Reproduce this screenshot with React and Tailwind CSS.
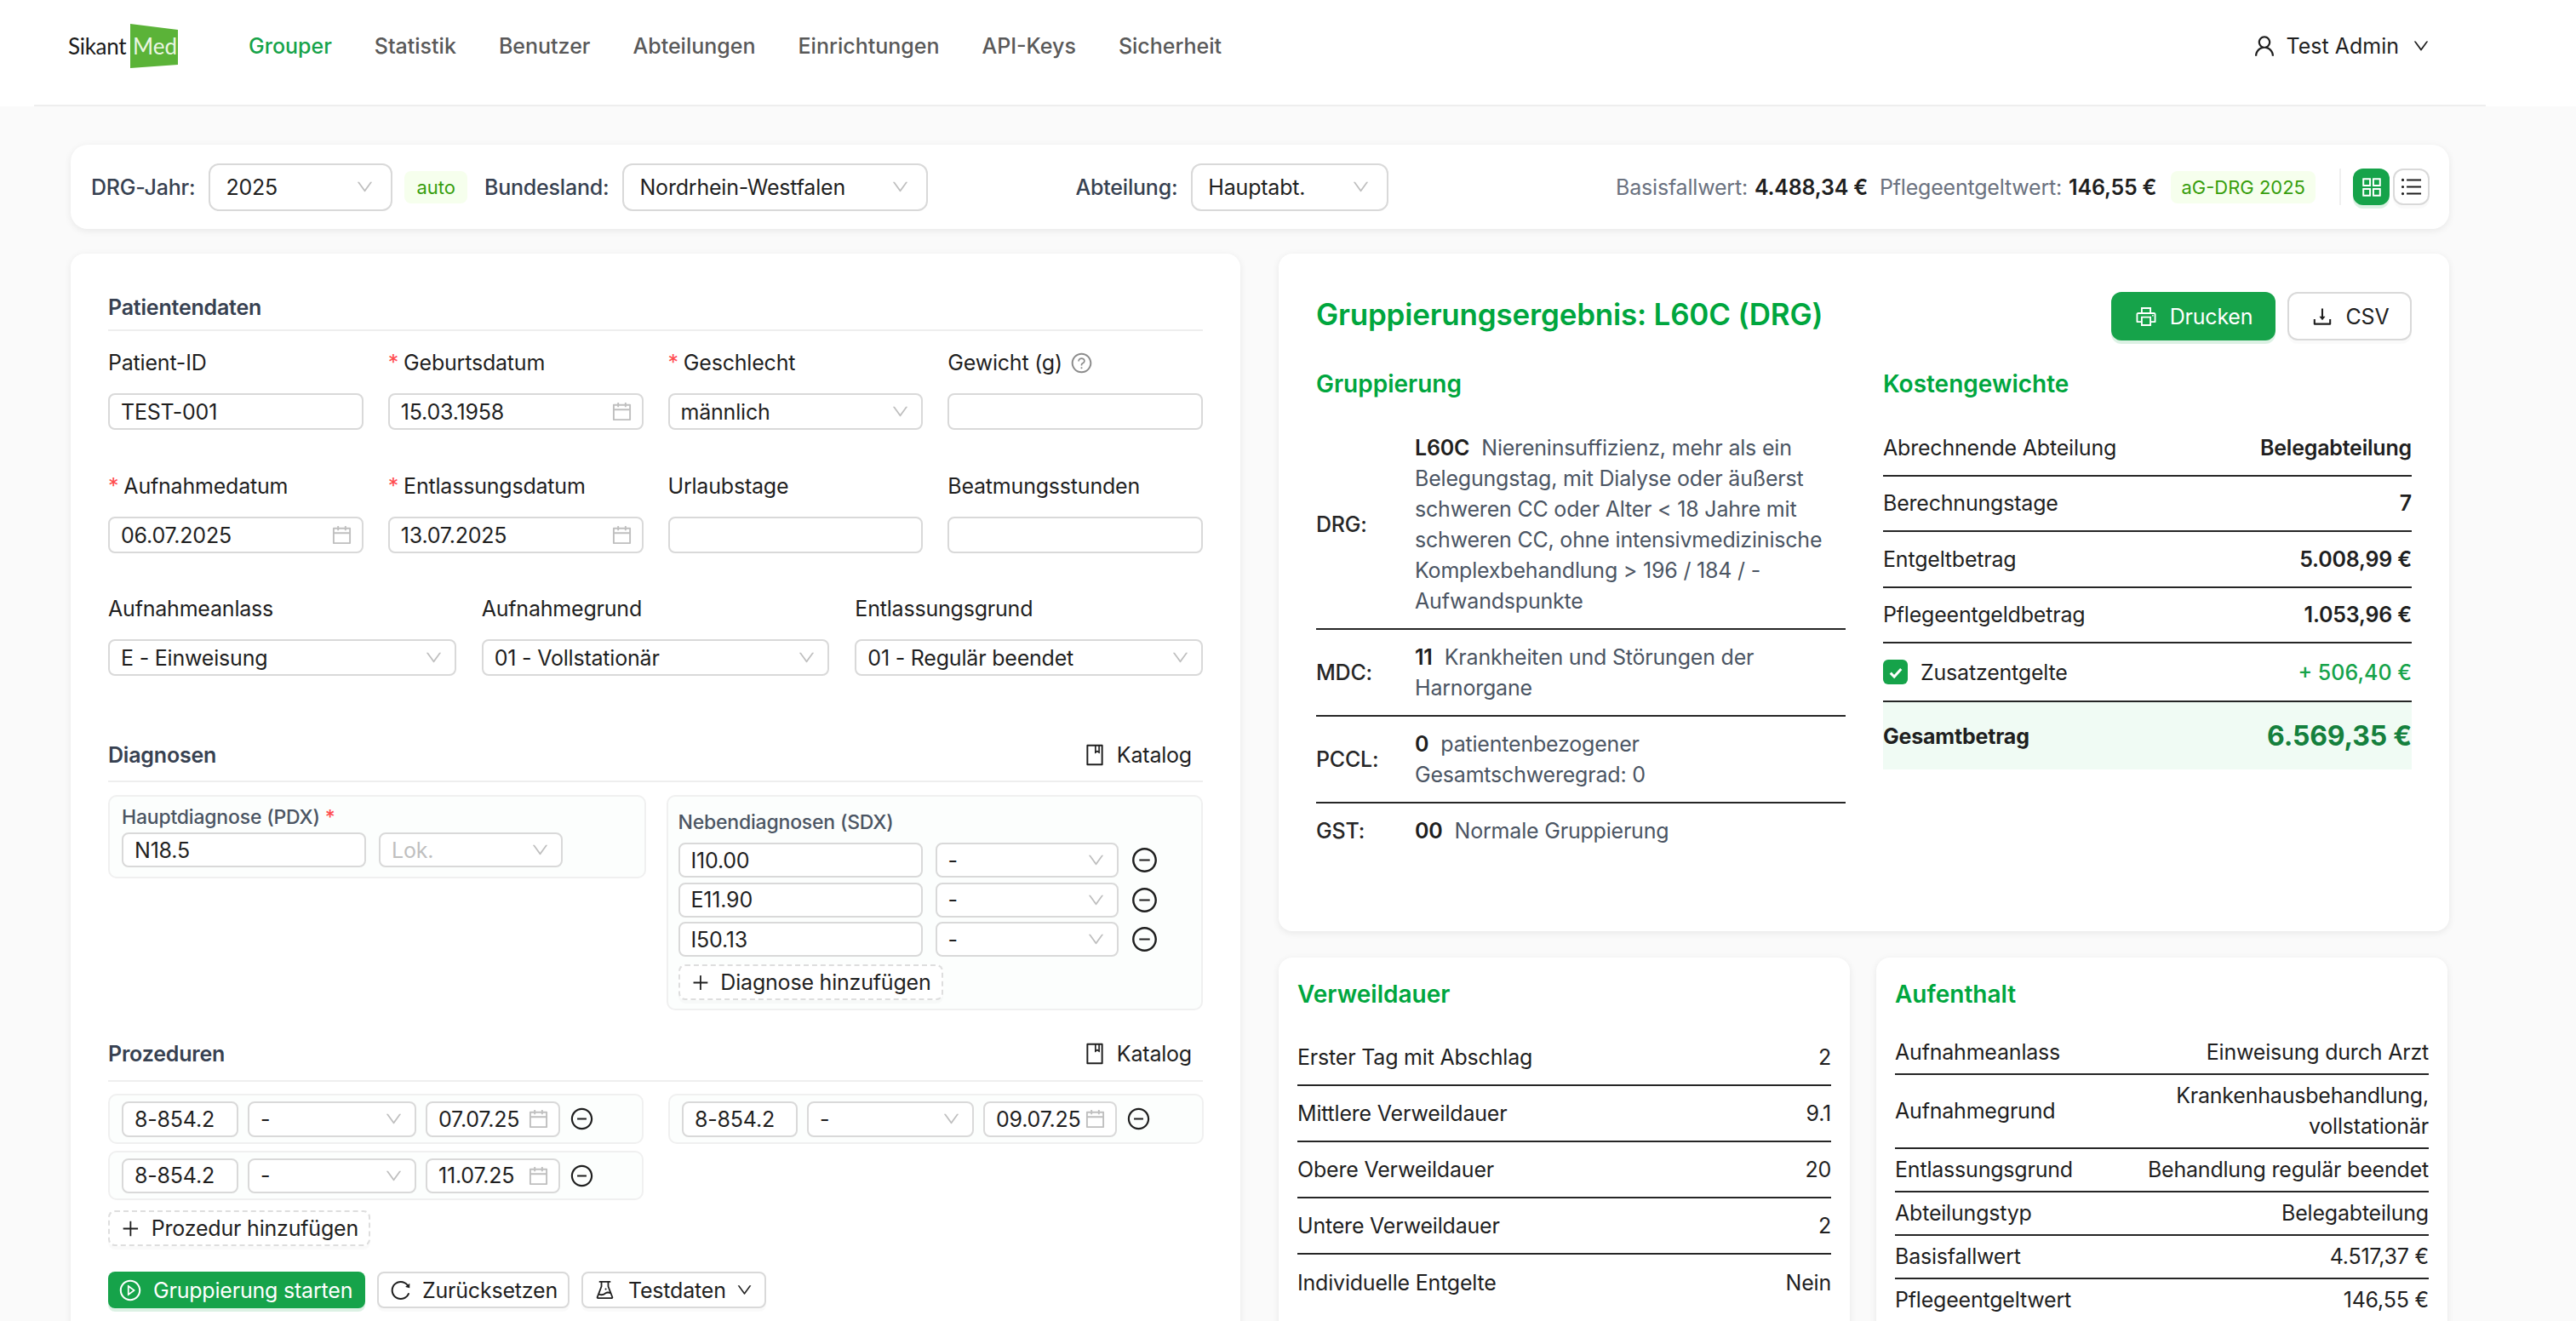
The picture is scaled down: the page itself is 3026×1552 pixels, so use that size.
import {
  AiOutlineAppstore,
  AiOutlineBook,
  AiOutlineCalendar,
  AiOutlineDown,
  AiOutlineDownload,
  AiOutlineExperiment,
  AiOutlineMinusCircle,
  AiOutlinePlayCircle,
  AiOutlinePlus,
  AiOutlinePrinter,
  AiOutlineQuestionCircle,
  AiOutlineReload,
  AiOutlineUnorderedList,
  AiOutlineUser,
} from "react-icons/ai";

const navLinks = ["Statistik", "Benutzer", "Abteilungen", "Einrichtungen", "API-Keys", "Sicherheit"];

const kosten = [
  ["Abrechnende Abteilung", "Belegabteilung"],
  ["Berechnungstage", "7"],
  ["Entgeltbetrag", "5.008,99 €"],
  ["Pflegeentgeldbetrag", "1.053,96 €"],
];

const verweildauer = [
  ["Erster Tag mit Abschlag", "2"],
  ["Mittlere Verweildauer", "9.1"],
  ["Obere Verweildauer", "20"],
  ["Untere Verweildauer", "2"],
  ["Individuelle Entgelte", "Nein"],
];

const aufenthalt = [
  ["Aufnahmeanlass", "Einweisung durch Arzt"],
  ["Aufnahmegrund", "Krankenhausbehandlung, vollstationär"],
  ["Entlassungsgrund", "Behandlung regulär beendet"],
  ["Abteilungstyp", "Belegabteilung"],
  ["Basisfallwert", "4.517,37 €"],
  ["Pflegeentgeltwert", "146,55 €"],
];

const Logo = () => (
  <div className="flex items-center w-[129px] h-[52px]">
    <span className="font-[Lato,sans-serif] text-[26px] tracking-[-0.3px] leading-none text-[#1a1a1a] w-[73px]">Sikant</span>
    <div className="relative w-[56px] h-[52px]">
      <svg viewBox="0 0 56 52" className="absolute inset-0 w-[56px] h-[52px]">
        <polygon points="0,0 56,7 56,48 0,52" fill="#5bb338" />
      </svg>
      <span className="absolute left-[3px] top-[13px] font-[Lato,sans-serif] text-[26px] leading-none text-[#eaf6e3]">Med</span>
    </div>
  </div>
);

const Tag = ({ children, pad = "px-[12px]" }) => (
  <span className={`h-[38px] flex items-center rounded-[8px] bg-[#f6ffed] text-[#389e0d] text-[22px] tracking-normal whitespace-nowrap ${pad}`}>
    {children}
  </span>
);

const Select = ({ value, className = "", pad = "px-[13px]", radius = "rounded-[8px]", placeholder = false }) => (
  <div className={`flex items-center justify-between bg-white border-2 border-[#d9d9d9] ${radius} ${pad} ${className}`}>
    <span className={placeholder ? "text-[#bfbfbf]" : "text-[#1f1f1f]"}>{value}</span>
    <AiOutlineDown className="w-[23px] h-[23px] text-[#bfbfbf] shrink-0" />
  </div>
);

const Input = ({ value = "", className = "" }) => (
  <div className={`flex items-center bg-white border-2 border-[#d9d9d9] rounded-[8px] px-[13px] text-[#1f1f1f] ${className}`}>
    {value}
  </div>
);

const DateInput = ({ value, className = "" }) => (
  <div className={`flex items-center justify-between bg-white border-2 border-[#d9d9d9] rounded-[8px] pl-[13px] pr-[10px] text-[#1f1f1f] ${className}`}>
    <span>{value}</span>
    <AiOutlineCalendar className="w-[27px] h-[27px] text-[#bfbfbf] shrink-0" />
  </div>
);

const Label = ({ children, required = false }) => (
  <div className="h-[36px] mb-[18px] flex items-center text-[#1f1f1f] whitespace-nowrap">
    {required && <span className="text-[#ff4d4f] mr-[6px]">*</span>}
    {children}
  </div>
);

const Field = ({ label, required, children }) => (
  <div>
    <Label required={required}>{label}</Label>
    {children}
  </div>
);

const SectionHeader = ({ title, catalog = false, box = "h-[50px] pb-[13px]", className = "" }) => (
  <div className={`flex items-center justify-between border-b-2 border-[#eeeeee] ${box} ${className}`}>
    <h3 className="font-semibold text-[#374151]">{title}</h3>
    {catalog && (
      <div className="flex items-center gap-[12px] pr-[13px] text-[#1f1f1f]">
        <AiOutlineBook className="w-[28px] h-[28px]" />
        Katalog
      </div>
    )}
  </div>
);

const AddButton = ({ label, className = "" }) => (
  <div className={`flex items-center gap-[12px] h-[42px] px-[12px] border-2 border-dashed border-[#dedede] rounded-[8px] bg-white text-[#1f1f1f] whitespace-nowrap shadow-[0_4px_0_rgba(0,0,0,0.02)] ${className}`}>
    <AiOutlinePlus className="w-[27px] h-[27px]" />
    {label}
  </div>
);

const Minus = ({ className = "w-[33px] h-[33px]" }) => <AiOutlineMinusCircle className={`text-[#1f1f1f] shrink-0 ${className}`} />;

const SdxRow = ({ code }) => (
  <div className="flex items-center">
    <Input value={code} className="w-[287px] h-[41px]" />
    <Select value="-" className="w-[215px] h-[41px] ml-[15px]" />
    <Minus className="w-[33px] h-[33px] ml-[14px]" />
  </div>
);

const ProcBox = ({ date, wide = true, rowH = "h-[42px]", boxH = "h-[59px]" }) => (
  <div className={`flex items-center gap-[11px] pl-[14px] border-2 border-[#f0f0f0] rounded-[10px] bg-[#fcfefd] ${boxH}`}>
    <Input value="8-854.2" className={`${rowH} ${wide ? "w-[137px]" : "w-[136px]"}`} />
    <Select value="-" className={`${rowH} ${wide ? "w-[198px]" : "w-[196px]"}`} />
    <DateInput value={date} className={`${rowH} ${wide ? "w-[158px]" : "w-[157px]"}`} />
    <Minus className="w-[29px] h-[29px]" />
  </div>
);

const DrgRow = ({ label, border = true, children }) => (
  <div className={`flex items-center py-[14px] ${border ? "border-b-2 border-[#262626]" : ""}`}>
    <div className="w-[116px] shrink-0 font-medium text-[#262626]">{label}</div>
    <div className="flex-1 text-[#4b5563]">{children}</div>
  </div>
);

const Code = ({ children }) => <span className="font-semibold text-[#1f1f1f] mr-[14px]">{children}</span>;

const CostRow = ({ label, value }) => (
  <div className="flex items-center justify-between h-[65.5px] border-b-2 border-[#262626]">
    <span className="text-[#1f1f1f]">{label}</span>
    <span className="font-semibold text-[#1f1f1f]">{value}</span>
  </div>
);

const InfoCard = ({ title, rows, rowClass, gap }) => (
  <div className="w-[671px] h-[500px] rounded-[16px] bg-white shadow-[0_2px_8px_rgba(0,0,0,0.08)] px-[22px] pt-[25px]">
    <h3 className={`text-[28px] tracking-normal font-semibold text-[#00a63e] ${gap}`}>{title}</h3>
    {rows.map(([label, value], i) => (
      <div
        key={label}
        className={`flex items-center justify-between gap-[24px] ${rowClass} ${i < rows.length - 1 ? "border-b-2 border-[#262626]" : ""}`}
      >
        <span className="text-[#1f1f1f] whitespace-nowrap">{label}</span>
        <span className="text-[#1f1f1f] text-right max-w-[340px]">{value}</span>
      </div>
    ))}
  </div>
);

const TopBar = () => (
  <div className="flex items-center h-[99px] pl-[24px] pr-[23px] rounded-[20px] bg-white shadow-[0_2px_8px_rgba(0,0,0,0.08)]">
    <span className="font-medium text-[#374151] mr-[16px]">DRG-Jahr:</span>
    <Select value="2025" pad="pl-[18px] pr-[19px]" radius="rounded-[12px]" className="w-[216px] h-[56px]" />
    <span className="ml-[14px]"><Tag pad="px-[14px]">auto</Tag></span>
    <span className="font-medium text-[#374151] ml-[20px] mr-[16px]">Bundesland:</span>
    <Select value="Nordrhein-Westfalen" pad="pl-[18px] pr-[19px]" radius="rounded-[12px]" className="w-[359px] h-[56px]" />
    <span className="font-medium text-[#374151] ml-[173px] mr-[16px]">Abteilung:</span>
    <Select value="Hauptabt." pad="pl-[18px] pr-[19px]" radius="rounded-[12px]" className="w-[232px] h-[56px]" />
    <div className="ml-auto flex items-center">
      <span className="text-[#6b7280]">Basisfallwert:</span>
      <span className="font-semibold text-[#1f1f1f] ml-[8px]">4.488,34 €</span>
      <span className="text-[#6b7280] ml-[14px]">Pflegeentgeltwert:</span>
      <span className="font-semibold text-[#1f1f1f] ml-[8px]">146,55 €</span>
      <span className="ml-[17px]"><Tag>aG-DRG 2025</Tag></span>
      <div className="w-[2px] h-[43px] bg-[#f0f0f0] ml-[28px] mr-[14px]" />
      <div className="flex items-center justify-center w-[43px] h-[43px] rounded-[12px] bg-[#16a34a] text-white shadow-[0_4px_0_rgba(22,163,74,0.15)]">
        <AiOutlineAppstore className="w-[30px] h-[30px]" />
      </div>
      <div className="flex items-center justify-center w-[43px] h-[43px] ml-[4px] rounded-[12px] bg-white border-2 border-[#d9d9d9] text-[#1f1f1f] shadow-[0_4px_0_rgba(0,0,0,0.02)]">
        <AiOutlineUnorderedList className="w-[29px] h-[29px]" />
      </div>
    </div>
  </div>
);

const LeftCard = () => (
  <div className="w-[1374px] h-[1400px] rounded-[16px] bg-white shadow-[0_2px_8px_rgba(0,0,0,0.08)] px-[44px] pt-[45px]">
    <SectionHeader title="Patientendaten" box="h-[46px] pb-[9px]" />

    <div className="grid grid-cols-4 gap-x-[29px] gap-y-[48px] mt-[19px]">
      <Field label="Patient-ID"><Input value="TEST-001" className="h-[43px]" /></Field>
      <Field label="Geburtsdatum" required><DateInput value="15.03.1958" className="h-[43px]" /></Field>
      <Field label="Geschlecht" required><Select value="männlich" className="h-[43px]" /></Field>
      <Field
        label={
          <>
            Gewicht (g)
            <AiOutlineQuestionCircle className="w-[27px] h-[27px] ml-[9px] text-[#8c8c8c]" />
          </>
        }
      >
        <Input className="h-[43px]" />
      </Field>
      <Field label="Aufnahmedatum" required><DateInput value="06.07.2025" className="h-[43px]" /></Field>
      <Field label="Entlassungsdatum" required><DateInput value="13.07.2025" className="h-[43px]" /></Field>
      <Field label="Urlaubstage"><Input className="h-[43px]" /></Field>
      <Field label="Beatmungsstunden"><Input className="h-[43px]" /></Field>
    </div>

    <div className="grid grid-cols-3 gap-x-[30px] mt-[47px]">
      <Field label="Aufnahmeanlass"><Select value="E - Einweisung" className="h-[43px]" /></Field>
      <Field label="Aufnahmegrund"><Select value="01 - Vollstationär" className="h-[43px]" /></Field>
      <Field label="Entlassungsgrund"><Select value="01 - Regulär beendet" className="h-[43px]" /></Field>
    </div>

    <SectionHeader title="Diagnosen" catalog className="mt-[75px]" />

    <div className="flex items-start gap-[24px] mt-[15px]">
      <div className="w-[632px] h-[98px] px-[14px] pt-[6px] border-2 border-[#f0f0f0] rounded-[10px] bg-[#fcfefd]">
        <div className="h-[36px] flex items-center text-[23px] font-medium text-[#4b5563]">
          Hauptdiagnose (PDX)
          <span className="text-[#ff4d4f] ml-[6px]">*</span>
        </div>
        <div className="flex gap-[15px]">
          <Input value="N18.5" className="w-[287px] h-[41px]" />
          <Select value="Lok." placeholder className="w-[216px] h-[41px]" />
        </div>
      </div>
      <div className="w-[631px] h-[253px] px-[12px] pt-[12px] border-2 border-[#f0f0f0] rounded-[10px] bg-[#fcfefd]">
        <div className="h-[36px] mb-[6px] flex items-center text-[23px] font-medium text-[#4b5563]">Nebendiagnosen (SDX)</div>
        <div className="flex flex-col gap-[5.5px]">
          <SdxRow code="I10.00" />
          <SdxRow code="E11.90" />
          <SdxRow code="I50.13" />
        </div>
        <AddButton label="Diagnose hinzufügen" className="w-[311px] mt-[9px]" />
      </div>
    </div>

    <SectionHeader title="Prozeduren" catalog box="h-[51px] pb-[14px]" className="mt-[33px]" />

    <div className="grid grid-cols-[629px_629px] gap-x-[29px] gap-y-[8px] mt-[14px]">
      <ProcBox date="07.07.25" />
      <ProcBox date="09.07.25" wide={false} />
      <ProcBox date="11.07.25" rowH="h-[41px]" boxH="h-[58px]" />
    </div>

    <AddButton label="Prozedur hinzufügen" className="w-[308px] mt-[12px]" />

    <div className="flex items-center gap-[14px] mt-[30px]">
      <div className="flex items-center gap-[13px] h-[43px] w-[302px] px-[12px] rounded-[8px] bg-[#16a34a] text-white whitespace-nowrap shadow-[0_4px_0_rgba(22,163,74,0.15)]">
        <AiOutlinePlayCircle className="w-[28px] h-[28px]" />
        Gruppierung starten
      </div>
      <div className="flex items-center gap-[12px] h-[43px] w-[226px] px-[12px] rounded-[8px] bg-white border-2 border-[#d9d9d9] text-[#1f1f1f] whitespace-nowrap shadow-[0_4px_0_rgba(0,0,0,0.02)]">
        <AiOutlineReload className="w-[28px] h-[28px]" />
        Zurücksetzen
      </div>
      <div className="flex items-center gap-[14px] h-[43px] w-[217px] px-[12px] rounded-[8px] bg-white border-2 border-[#d9d9d9] text-[#1f1f1f] whitespace-nowrap shadow-[0_4px_0_rgba(0,0,0,0.02)]">
        <AiOutlineExperiment className="w-[27px] h-[27px]" />
        Testdaten
        <AiOutlineDown className="w-[21px] h-[21px] -ml-[3px]" />
      </div>
    </div>
  </div>
);

const ResultCard = () => (
  <div className="h-[796px] rounded-[16px] bg-white shadow-[0_2px_8px_rgba(0,0,0,0.08)] pl-[44px] pr-[44px] pt-[45px]">
    <div className="flex items-center justify-between h-[57px]">
      <h2 className="text-[35px] font-semibold text-[#00a63e] -mt-[6px]">Gruppierungsergebnis: L60C (DRG)</h2>
      <div className="flex items-center gap-[14px]">
        <div className="flex items-center justify-center gap-[14px] w-[193px] h-[57px] rounded-[12px] bg-[#16a34a] text-white shadow-[0_4px_0_rgba(22,163,74,0.15)]">
          <AiOutlinePrinter className="w-[28px] h-[28px]" />
          Drucken
        </div>
        <div className="flex items-center justify-center gap-[14px] w-[146px] h-[57px] rounded-[12px] bg-white border-2 border-[#d9d9d9] text-[#1f1f1f] shadow-[0_4px_0_rgba(0,0,0,0.02)]">
          <AiOutlineDownload className="w-[28px] h-[28px]" />
          CSV
        </div>
      </div>
    </div>

    <div className="grid grid-cols-[622px_621px] gap-x-[44px] mt-[33px]">
      <div>
        <h3 className="text-[28px] tracking-normal leading-[36px] font-semibold text-[#00a63e] mb-[25px]">Gruppierung</h3>
        <DrgRow label="DRG:">
          <Code>L60C</Code>
          Niereninsuffizienz, mehr als ein Belegungstag, mit Dialyse oder äußerst schweren CC oder Alter &lt; 18 Jahre mit schweren CC, ohne intensivmedizinische Komplexbehandlung &gt; 196 / 184 / -Aufwandspunkte
        </DrgRow>
        <DrgRow label="MDC:">
          <Code>11</Code>
          Krankheiten und Störungen der Harnorgane
        </DrgRow>
        <DrgRow label="PCCL:">
          <Code>0</Code>
          patientenbezogener Gesamtschweregrad: 0
        </DrgRow>
        <DrgRow label="GST:" border={false}>
          <Code>00</Code>
          Normale Gruppierung
        </DrgRow>
      </div>

      <div>
        <h3 className="text-[28px] tracking-normal leading-[36px] font-semibold text-[#00a63e] mb-[25px]">Kostengewichte</h3>
        {kosten.map(([label, value]) => (
          <CostRow key={label} label={label} value={value} />
        ))}
        <div className="flex items-center justify-between h-[69px] border-b-2 border-[#262626]">
          <span className="flex items-center gap-[15px] text-[#1f1f1f]">
            <span className="flex items-center justify-center w-[29px] h-[29px] rounded-[6px] bg-[#16a34a]">
              <svg viewBox="0 0 16 16" className="w-[20px] h-[20px]" fill="none" stroke="#fff" strokeWidth="2.4">
                <path d="M3 8.5 6.5 12 13 4.8" />
              </svg>
            </span>
            Zusatzentgelte
          </span>
          <span className="font-medium tracking-normal text-[#16a34a]">+ 506,40 €</span>
        </div>
        <div className="flex items-center justify-between h-[79px] bg-[#f0fbf4]">
          <span className="font-bold text-[#1f1f1f]">Gesamtbetrag</span>
          <span className="text-[32px] font-bold text-[#15803d]">6.569,35 €</span>
        </div>
      </div>
    </div>
  </div>
);

export default function App() {
  return (
    <div className="h-screen overflow-hidden bg-[#fafafa] font-[Inter,sans-serif] text-[25px] leading-[36px] tracking-[-0.2px]">
      <nav className="h-[125px] bg-white">
        <div className="flex items-center w-[2880px] h-[125px] ml-[40px] pl-[40px] pr-[65px] pb-[15px] border-b-2 border-[#eeeeee] tracking-normal">
          <Logo />
          <div className="flex items-center gap-[50px] ml-[83px] font-medium text-[#595959]">
            <span className="text-[#16a34a]">Grouper</span>
            {navLinks.map((link) => (
              <span key={link}>{link}</span>
            ))}
          </div>
          <div className="ml-auto flex items-center text-[#1f1f1f]">
            <AiOutlineUser className="w-[30px] h-[30px] mr-[11px]" />
            Test Admin
            <AiOutlineDown className="w-[22px] h-[22px] ml-[15px]" />
          </div>
        </div>
      </nav>

      <main className="w-[2960px] px-[83px] pt-[45px]">
        <TopBar />
        <div className="flex items-start gap-[45px] mt-[29px]">
          <LeftCard />
          <div className="w-[1375px]">
            <ResultCard />
            <div className="flex gap-[31px] mt-[31px]">
              <InfoCard title="Verweildauer" rows={verweildauer} rowClass="h-[66px]" gap="mb-[24px]" />
              <InfoCard title="Aufenthalt" rows={aufenthalt} rowClass="py-[6.5px]" gap="mb-[25.5px]" />
            </div>
          </div>
        </div>
      </main>
    </div>
  );
}
